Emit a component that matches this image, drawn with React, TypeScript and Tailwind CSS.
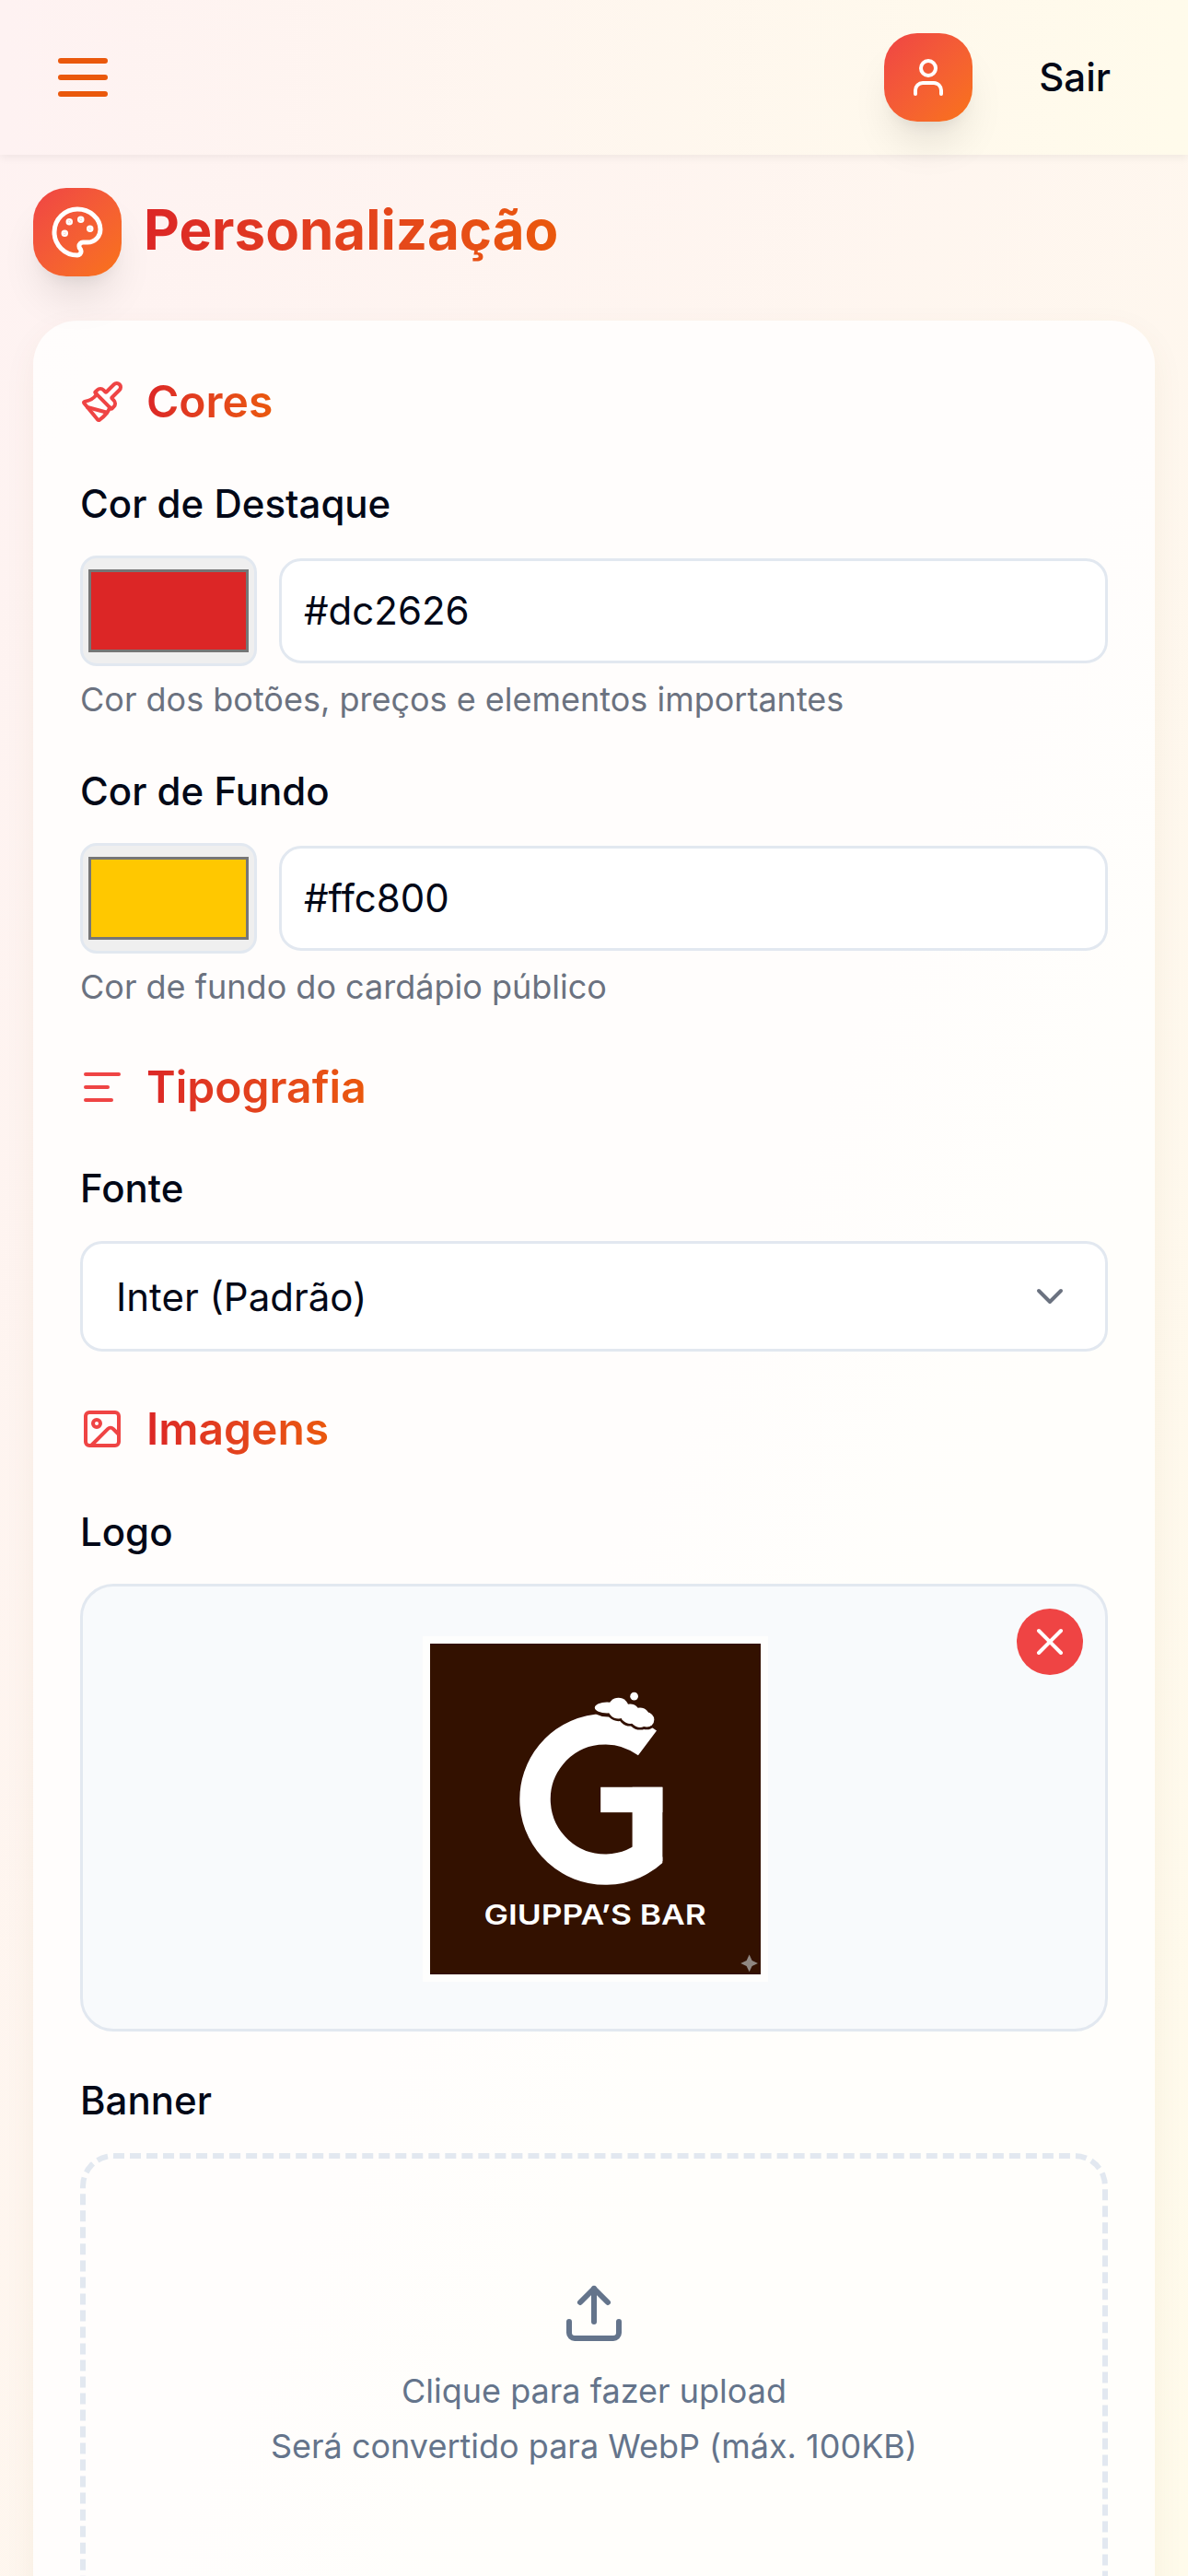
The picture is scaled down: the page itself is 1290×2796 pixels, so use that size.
import { AlignLeft, ChevronDown, Image, Paintbrush, Upload, User, X } from "lucide-react";

const fontStack = "[font-family:Inter,'Noto_Sans',sans-serif]";

function MenuIcon() {
  return (
    <svg viewBox="0 0 24 24" className="w-[72px] h-[72px] text-[#ea580c]" fill="none" stroke="currentColor" strokeWidth="2" strokeLinecap="round">
      <path d="M4 6h16M4 12h16M4 18h16" />
    </svg>
  );
}

function PaletteIcon() {
  return (
    <svg viewBox="0 0 24 24" className="w-[60px] h-[60px] text-white" fill="none" stroke="currentColor" strokeWidth="2" strokeLinecap="round" strokeLinejoin="round">
      <circle cx="13.5" cy="6.5" r=".5" fill="currentColor" />
      <circle cx="17.5" cy="10.5" r=".5" fill="currentColor" />
      <circle cx="8.5" cy="7.5" r=".5" fill="currentColor" />
      <circle cx="6.5" cy="12.5" r=".5" fill="currentColor" />
      <path d="M12 2C6.5 2 2 6.5 2 12s4.5 10 10 10c.926 0 1.648-.746 1.648-1.688 0-.437-.18-.835-.437-1.125-.29-.289-.438-.652-.438-1.125a1.64 1.64 0 0 1 1.668-1.668h1.996c3.051 0 5.555-2.503 5.555-5.554C21.965 6.012 17.461 2 12 2z" />
    </svg>
  );
}

function SectionTitle({ icon, children }: { icon: React.ReactNode; children: string }) {
  return (
    <div className="flex items-center gap-[24px] h-[60px]">
      <span className="text-[#ef4444] flex w-[48px] shrink-0 justify-center">{icon}</span>
      <h2 className="text-[48px] leading-[60px] font-semibold bg-gradient-to-r from-[#dc2626] to-[#ea580c] bg-clip-text text-transparent">
        {children}
      </h2>
    </div>
  );
}

function ColorField({ label, value, hint, color }: { label: string; value: string; hint: string; color: string }) {
  return (
    <div className="flex flex-col">
      <label className="text-[42px] leading-[60px] font-medium text-[#020817]">{label}</label>
      <div className="flex items-center gap-[24px] mt-[26px]">
        <div className="w-[192px] h-[120px] rounded-[18px] border-[3px] border-[#e2e8f0] bg-[#efefef] flex items-center justify-center">
          <div className={`w-[174px] h-[90px] border-[3px] border-[#767676] ${color}`} />
        </div>
        <input
          readOnly
          value={value}
          className="flex-1 min-w-0 h-[114px] rounded-[24px] border-[3px] border-[#e2e8f0] bg-white px-[24px] pb-[2px] text-[42px] text-[#020817] outline-none"
        />
      </div>
      <p className="text-[36px] leading-[54px] text-[#6b7280] mt-[9px]">{hint}</p>
    </div>
  );
}

function Logo() {
  return (
    <div className="bg-[#fefefd] p-[8px] ml-[3px] mt-[2px]">
      <svg viewBox="0 0 1074 1074" className="block w-[359px] h-[359px]">
        <defs>
          <clipPath id="logo-g">
            <rect x="0" y="0" width="755" height="1074" />
          </clipPath>
        </defs>
        <rect width="1074" height="1074" fill="#331100" />
        <path d="M706 323 A228 228 0 1 0 730 667" fill="none" stroke="#fff" strokeWidth="100" clipPath="url(#logo-g)" />
        <rect x="554" y="466" width="201" height="82" fill="#fff" />
        <rect x="657" y="466" width="98" height="240" fill="#fff" />
        <g fill="#331100">
          <ellipse cx="578" cy="212" rx="50" ry="26" />
          <circle cx="612" cy="210" r="42" />
          <circle cx="650" cy="228" r="40" />
          <circle cx="682" cy="240" r="40" />
          <circle cx="704" cy="247" r="32" />
        </g>
        <g fill="#fff">
          <ellipse cx="575" cy="208" rx="40" ry="18" />
          <circle cx="612" cy="210" r="34" />
          <circle cx="650" cy="228" r="32" />
          <circle cx="682" cy="240" r="32" />
          <circle cx="704" cy="247" r="24" />
        </g>
        <circle cx="663" cy="171" r="13" fill="#fff" />
        <text x="175" y="911" textLength="722" lengthAdjust="spacingAndGlyphs" fontSize="90" fontWeight="600" fill="#fff" fontFamily="Inter, sans-serif">
          GIUPPA’S BAR
        </text>
        <path d="M1037 1010 L1046 1029 L1065 1038 L1046 1047 L1037 1066 L1028 1047 L1009 1038 L1028 1029 Z" fill="#8f8781" />
      </svg>
    </div>
  );
}

export default function App() {
  return (
    <div className={`w-[1290px] h-[2796px] overflow-hidden bg-gradient-to-br from-[#fef2f2] to-[#fffbeb] ${fontStack}`}>
      <header className="relative z-10 h-[168px] flex items-center justify-between pl-[54px] pr-[84px] bg-gradient-to-r from-[#fef2f2] to-[#fffbeb] shadow-[0_3px_9px_rgba(0,0,0,0.06)]">
        <MenuIcon />
        <div className="flex items-center gap-[72px]">
          <div className="w-[96px] h-[96px] rounded-[36px] bg-gradient-to-br from-[#ef4444] to-[#f97316] flex items-center justify-center shadow-[0_30px_45px_-9px_rgba(0,0,0,0.1),0_12px_18px_-12px_rgba(0,0,0,0.1)]">
            <User size={48} className="text-white" />
          </div>
          <span className="text-[42px] font-medium text-[#020817] pb-[2px]">Sair</span>
        </div>
      </header>

      <main className="px-[36px]">
        <div className="flex items-center gap-[24px] mt-[36px]">
          <div className="w-[96px] h-[96px] rounded-[36px] bg-gradient-to-br from-[#ef4444] to-[#f97316] flex items-center justify-center shadow-[0_30px_45px_-9px_rgba(0,0,0,0.1),0_12px_18px_-12px_rgba(0,0,0,0.1)]">
            <PaletteIcon />
          </div>
          <h1 className="text-[60px] leading-[72px] font-bold pb-[6px] bg-gradient-to-r from-[#dc2626] to-[#ea580c] bg-clip-text text-transparent">
            Personalização
          </h1>
        </div>

        <section className="mt-[48px] rounded-[48px] bg-white/80 shadow-[0_12px_36px_rgba(120,80,0,0.06)] px-[51px] pt-[58px] pb-[60px]">
          <SectionTitle icon={<Paintbrush size={48} />}>Cores</SectionTitle>
          <div className="mt-[51px] flex flex-col gap-[43px]">
            <ColorField label="Cor de Destaque" value="#dc2626" hint="Cor dos botões, preços e elementos importantes" color="bg-[#dc2626]" />
            <ColorField label="Cor de Fundo" value="#ffc800" hint="Cor de fundo do cardápio público" color="bg-[#ffc800]" />
          </div>

          <div className="mt-[52px]">
            <SectionTitle icon={<AlignLeft size={48} />}>Tipografia</SectionTitle>
          </div>
          <label className="block mt-[50px] text-[42px] leading-[60px] font-medium text-[#020817]">Fonte</label>
          <div className="mt-[27px] h-[120px] rounded-[24px] border-[3px] border-[#e2e8f0] bg-white flex items-center justify-between pl-[36px] pr-[36px] text-[42px] text-[#020817]">
            Inter (Padrão)
            <ChevronDown size={48} className="text-[#6b7280]" />
          </div>

          <div className="mt-[54px]">
            <SectionTitle icon={<Image size={48} />}>Imagens</SectionTitle>
          </div>
          <label className="block mt-[52px] text-[42px] leading-[60px] font-medium text-[#020817]">Logo</label>
          <div className="relative mt-[26px] h-[486px] rounded-[36px] border-[3px] border-[#e2e8f0] bg-[#f8fafc] flex items-center justify-center">
            <Logo />
            <button className="absolute top-[24px] right-[24px] w-[72px] h-[72px] rounded-full bg-[#ef4444] flex items-center justify-center">
              <X size={48} className="text-white" />
            </button>
          </div>
          <label className="block mt-[45px] text-[42px] leading-[60px] font-medium text-[#020817]">Banner</label>
          <div className="mt-[27px] h-[600px] rounded-[36px] border-[6px] border-dashed border-[#e2e8f0] flex flex-col items-center pt-[132px]">
            <Upload size={72} className="text-[#64748b]" />
            <p className="mt-[18px] text-[36px] leading-[60px] text-[#64748b]">Clique para fazer upload</p>
            <p className="text-[36px] leading-[60px] text-[#64748b]">Será convertido para WebP (máx. 100KB)</p>
          </div>
        </section>
      </main>
    </div>
  );
}
